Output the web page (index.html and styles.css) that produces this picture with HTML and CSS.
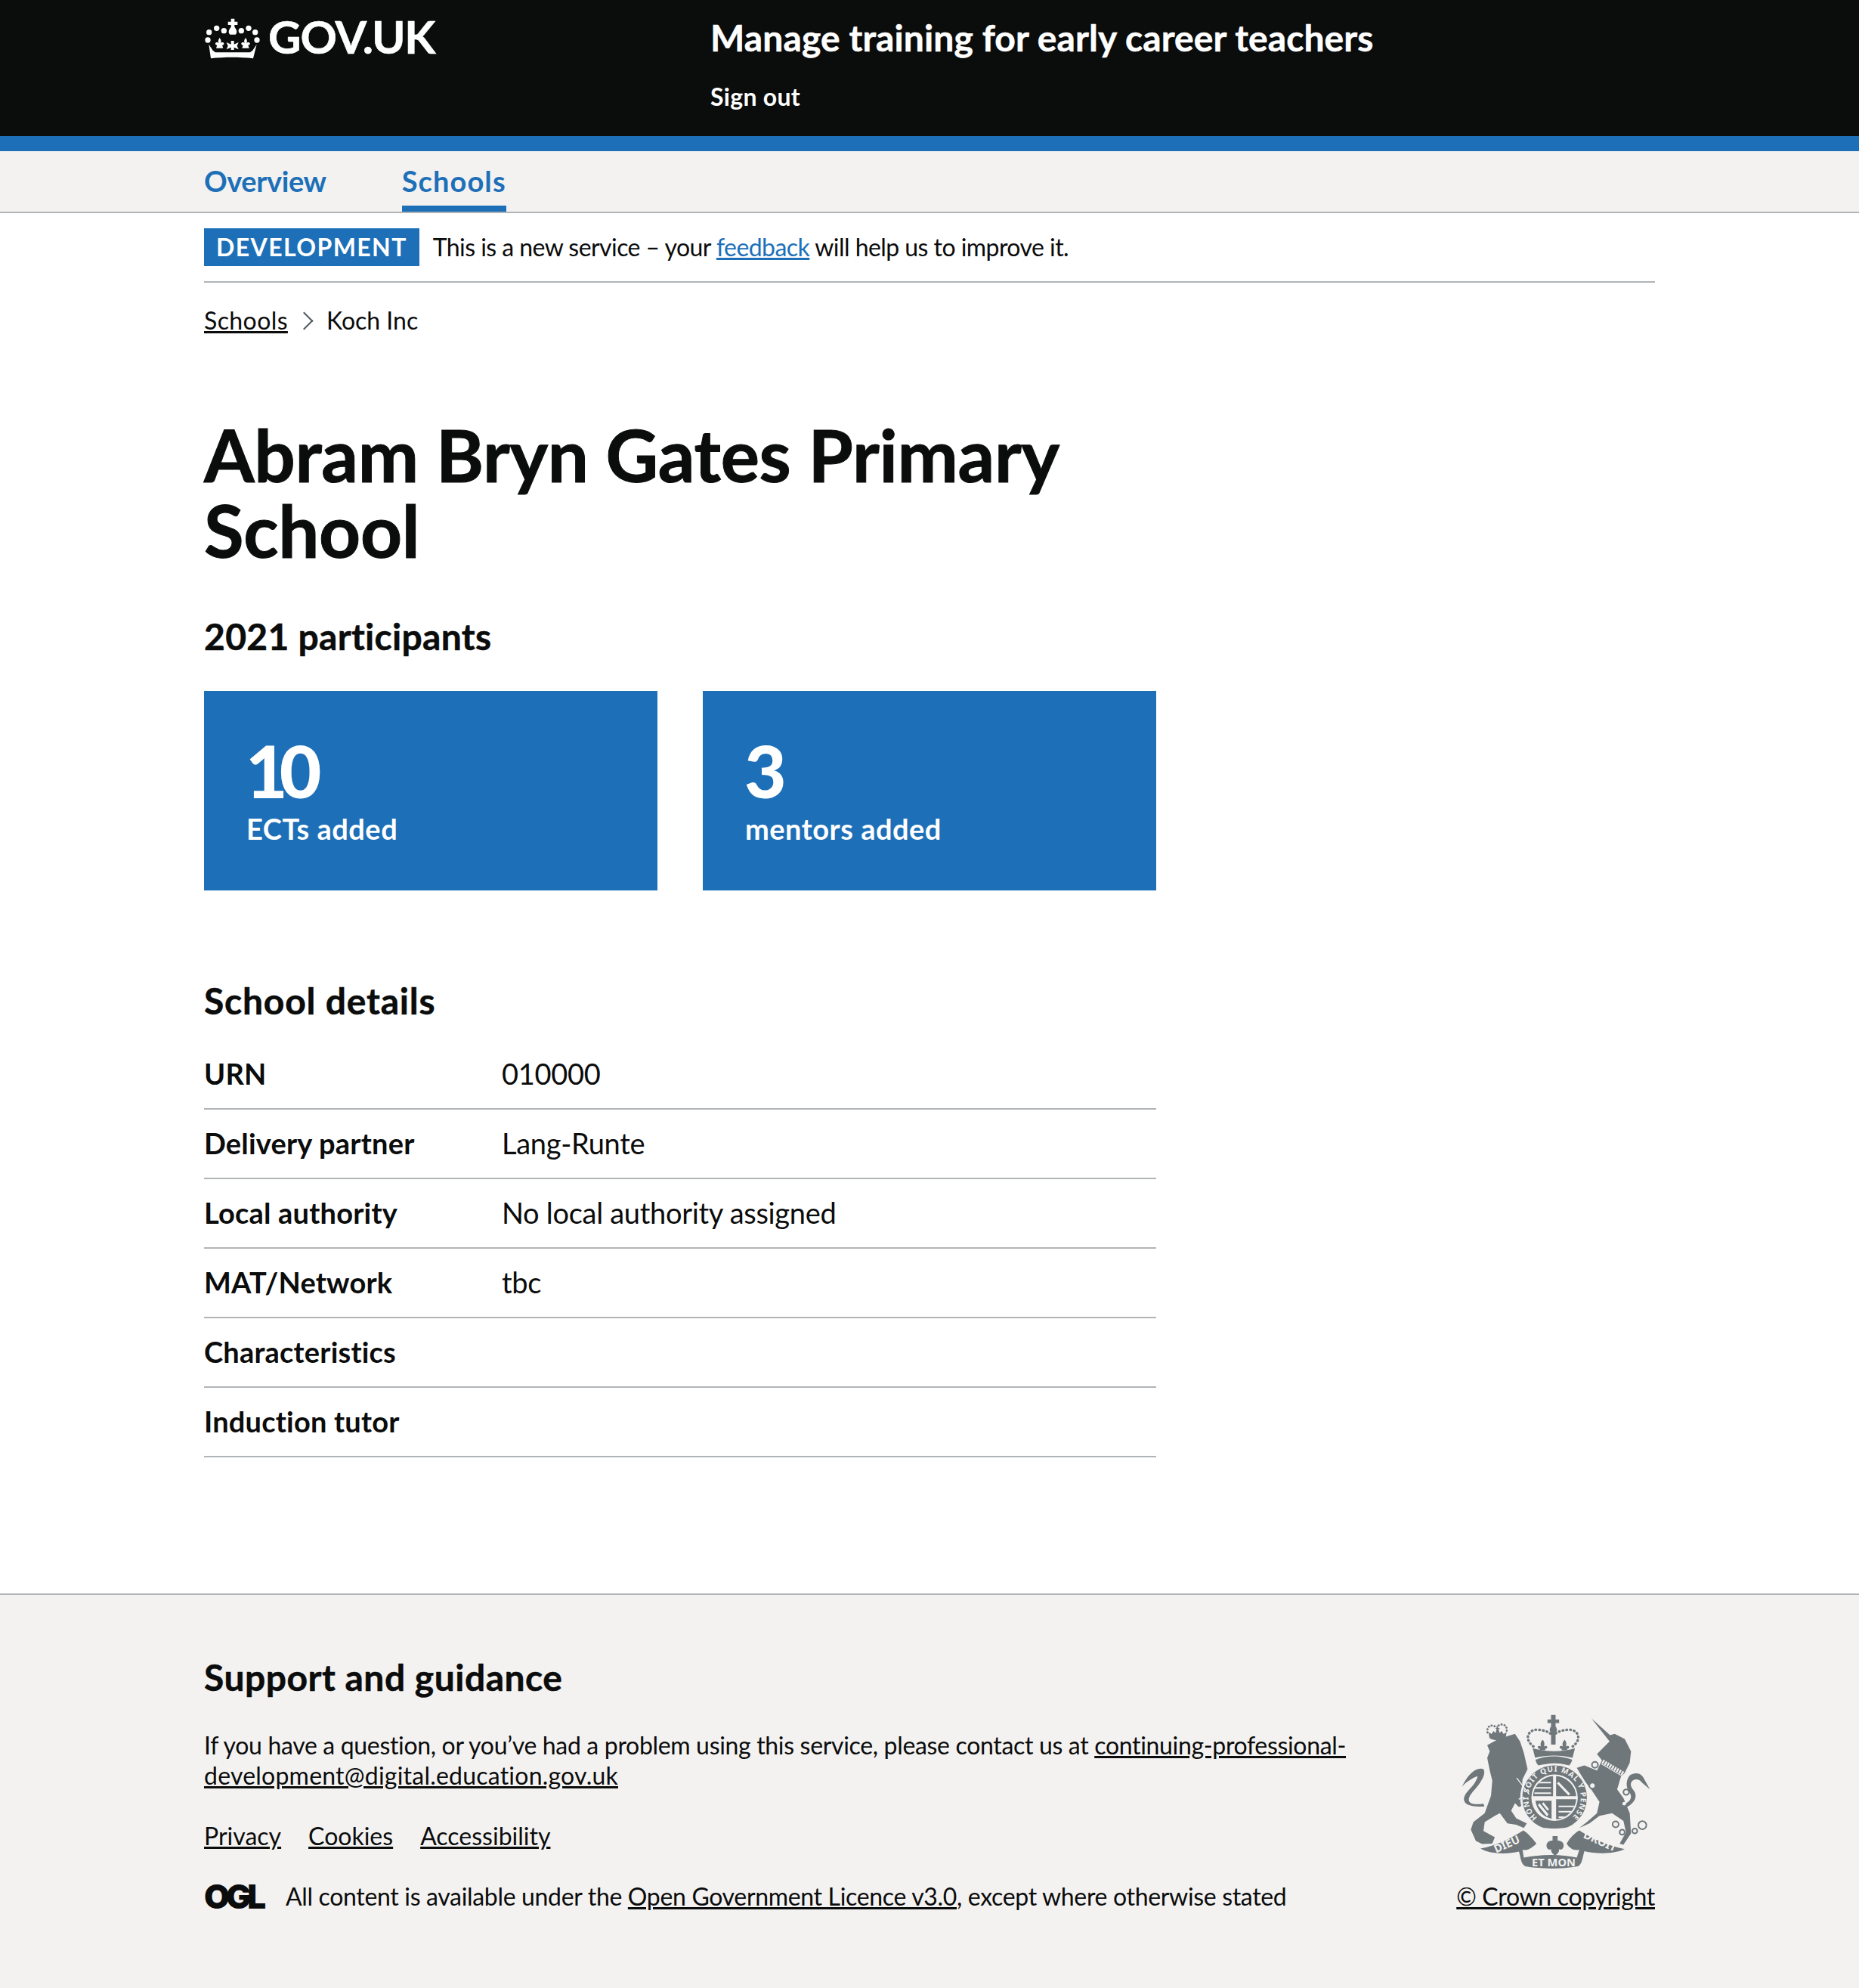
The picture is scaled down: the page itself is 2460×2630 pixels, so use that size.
FILE: index.html
```html
<!DOCTYPE html>
<html lang="en">
<head>
  <meta charset="UTF-8">
  <title>Abram Bryn Gates Primary School</title>
  <link rel="stylesheet" href="styles.css">
</head>
<body>

  <header class="site-header">
    <div class="width-container header-inner">
      <a class="logo" href="#">
        <svg class="crown" viewBox="85 65 225 168" aria-hidden="true">
          <g fill="#fff">
            <path d="M192 70h14v12h12v13h-12v8c10 12 12 22 4 30h-22c-8-8-6-18 4-30v-8h-12V82h12z"/>
            <circle cx="105" cy="124" r="11"/><circle cx="135" cy="108" r="11"/><circle cx="164" cy="118" r="11"/>
            <circle cx="233" cy="118" r="11"/><circle cx="262" cy="108" r="11"/><circle cx="288" cy="124" r="11"/>
            <circle cx="100" cy="155" r="11"/><circle cx="295" cy="155" r="11"/>
            <path d="M147 146c7 9 7 16 3 22 3-5 12-6 14 0 1 5-3 8-7 7l4 12h-28l4-12c-4 1-8-2-7-7 2-6 11-5 14 0-4-6-4-13 3-22z"/>
            <path d="M250 146c7 9 7 16 3 22 3-5 12-6 14 0 1 5-3 8-7 7l4 12h-28l4-12c-4 1-8-2-7-7 2-6 11-5 14 0-4-6-4-13 3-22z"/>
            <path d="M192 158h12v14l18-8-6 14 6 14-18-8v10h-12v-10l-18 8 6-14-6-14 18 8z"/>
            <path d="M104 172l16 24 10 8h138l10-8 16-24-14 56c-50-6-118-6-168 0z"/>
          </g>
        </svg>
        <span class="logo-text">GOV.UK</span>
      </a>
      <div class="service">
        <a class="service-name" href="#">Manage training for early career teachers</a>
        <a class="sign-out" href="#">Sign out</a>
      </div>
    </div>
  </header>

  <nav class="primary-nav">
    <ul class="width-container nav-list">
      <li><a href="#">Overview</a></li>
      <li class="nav-active"><a href="#">Schools</a></li>
    </ul>
  </nav>

  <div class="width-container">
    <div class="phase-banner">
      <strong class="phase-tag">DEVELOPMENT</strong>
      <span>This is a new service – your <a class="link" href="#">feedback</a> will help us to improve it.</span>
    </div>

    <ol class="breadcrumbs">
      <li class="crumb-link"><a href="#">Schools</a></li>
      <li class="crumb-sep" aria-hidden="true"></li>
      <li>Koch Inc</li>
    </ol>

    <main class="main">
      <h1>Abram Bryn Gates Primary School</h1>

      <h2 class="participants-title">2021 participants</h2>
      <div class="cards">
        <div class="card">
          <span class="card-number">10</span>
          <span class="card-label">ECTs added</span>
        </div>
        <div class="card">
          <span class="card-number">3</span>
          <span class="card-label">mentors added</span>
        </div>
      </div>

      <h2 class="details-title">School details</h2>
      <dl class="summary">
        <div class="row"><dt>URN</dt><dd>010000</dd></div>
        <div class="row"><dt>Delivery partner</dt><dd>Lang-Runte</dd></div>
        <div class="row"><dt>Local authority</dt><dd>No local authority assigned</dd></div>
        <div class="row"><dt>MAT/Network</dt><dd>tbc</dd></div>
        <div class="row"><dt>Characteristics</dt><dd></dd></div>
        <div class="row"><dt>Induction tutor</dt><dd></dd></div>
      </dl>
    </main>
  </div>

  <footer class="footer">
    <div class="width-container footer-inner">
      <div class="footer-main">
        <h2>Support and guidance</h2>
        <p class="contact">If you have a question, or you’ve had a problem using this service, please contact us at <a href="#">continuing-professional-<span class="email-rest">development@digital.education.gov.uk</span></a></p>
        <ul class="footer-links">
          <li><a href="#">Privacy</a></li>
          <li><a href="#">Cookies</a></li>
          <li><a href="#">Accessibility</a></li>
        </ul>
        <div class="licence">
          <span class="ogl">OGL</span>
          <span>All content is available under the <a href="#">Open Government Licence v3.0</a>, except where otherwise stated</span>
        </div>
      </div>
      <div class="footer-crest">
        <svg class="crest" viewBox="100 75 755 620" aria-hidden="true">
          <defs>
            <clipPath id="shield-clip"><circle cx="472" cy="408" r="86"/></clipPath>
            <path id="garter-arc" d="M404 487A104 104 0 1 1 540 487"/>
          </defs>
          <g fill="#6f777b">
            <!-- lion -->
            <path d="M205 200l45-25 65-20 20 30 15 45 15 65-20 40-5 65 25 25-20 15-15 5-15-15-15 30 20 30 42 20-12 18-30-13-35-5-30-40-20 10-40 25-5 35 45 25-10 25-40 2-25-12-20-45 10-30 45-35 25-70 5-60-10-40-10-50 10-25z"/>
            <path d="M190 432c-60 8-75-10-38-52 36-40 48-70 38-85-25-10-60 15-85 70 15-18 40-35 62-42-5 22-20 40-38 58-30 32-25 68 65 62z"/>
            <!-- lion crown -->
            <path d="M214 172l-4-24 12 8 8-12 8 8 4-16-6-4h6v-8h6v8h8l-6 4 4 16 8-8 8 12 12-8-4 24c-20 10-44 12-64 0z"/>
            <g fill="none" stroke="#6f777b" stroke-width="8" stroke-dasharray="1 11" stroke-linecap="round">
              <path d="M206 150c-4-24 14-34 30-24M250 122c16-10 36 0 32 22"/>
            </g>
            <!-- unicorn -->
            <path d="M618 94l74 66 18-5 40 20 25 50-5 45-20 40-15 15-15 50 25 35 25 60 5 80-30 45-15-5 25-45-10-45-45-30-50 10-40 30-40 18 30-23 40-35 10-45-30-45-30-40-30-50 30-10 50 20 20-40-20-25 50-50z"/>
            <path d="M770 320c20-14 45-10 55 10l25 45-30-25c-10-15-30-20-42-6-8 12-2 24 8 36 16 22 6 48-28 66l-5-14c22-12 28-28 16-44-16-22-14-50 1-68z"/>
            <!-- crown over shield -->
            <path d="M458 80h18v18h14v14h-14v14c8 10 6 20 0 24v48h-18v-48c-6-4-8-14 0-24v-14h-14V98h14z"/>
            <path d="M425 178c8 10 8 20 4 28 3-4 12-5 14 1 1 5-4 8-8 7v6h-22v-6c-4 1-9-2-8-7 2-6 11-5 14-1-4-8-4-18 6-28zM512 178c8 10 8 20 4 28 3-4 12-5 14 1 1 5-4 8-8 7v6h-22v-6c-4 1-9-2-8-7 2-6 11-5 14-1-4-8-4-18 6-28z"/>
            <path d="M385 212c50 16 120 16 168 0l-10 38c-45-12-102-12-148 0z"/>
            <path d="M396 258c46-18 100-18 146 0-2 10-8 18-12 22-40-10-80-10-122 0-4-4-10-12-12-22z"/>
            <g fill="none" stroke="#6f777b" stroke-width="10" stroke-dasharray="2 13" stroke-linecap="round">
              <path d="M388 205c-40-30-20-70 20-66 25 2 45 10 58 24 12-14 32-22 58-24 40-4 60 36 20 66"/>
            </g>
            <!-- garter -->
            <circle cx="472" cy="408" r="132" stroke="#f3f2f1" stroke-width="8"/>
          </g>
          <circle cx="472" cy="408" r="92" fill="#f3f2f1"/>
          <g clip-path="url(#shield-clip)">
            <path fill="#6f777b" d="M380 316h86v86h-86zM478 316h86v86h-86zM478 414h86v86h-86z"/>
            <path fill="#f3f2f1" d="M392 345h66v6h-66zM392 366h66v6h-66zM392 387h66v6h-66zM488 345l46 48-7 6-46-48zM488 440h66v6h-66zM488 461h66v6h-66zM488 482h66v6h-66z"/>
            <path fill="#6f777b" d="M396 420h64v72c-36-8-58-34-64-72z"/>
            <path fill="#f3f2f1" d="M412 430l36 44-6 8-36-44zM428 426l22 28-6 6-22-28z"/>
          </g>
          <!-- collar and chain -->
          <path fill="none" stroke="#f3f2f1" stroke-width="16" stroke-dasharray="7 4" d="M662 264l84 50"/>
          <path fill="none" stroke="#f3f2f1" stroke-width="3" d="M658 274l84 50"/>
          <path fill="none" stroke="#f3f2f1" stroke-width="4" d="M322 330l50 66M330 415c10-10 18-12 24-4"/>
          <g fill="#f3f2f1" stroke="#6f777b" stroke-width="6">
            <circle cx="632" cy="278" r="12"/><circle cx="622" cy="360" r="12"/><circle cx="756" cy="386" r="11"/>
            <circle cx="714" cy="514" r="12"/><circle cx="740" cy="545" r="10"/><circle cx="790" cy="540" r="10"/><circle cx="820" cy="517" r="16"/>
          </g>
          <circle cx="748" cy="432" r="7" fill="#f3f2f1"/>
          <!-- scrolls -->
          <path fill="#6f777b" d="M178 610c60-10 120-40 170-72 20 12 34 30 52 52-20 20-40 30-55 24l5 32c70-14 150-14 210 0l10-32c-20 6-40-6-50-24 14-24 30-40 50-52 50 32 110 60 180 74-40 20-110 20-160 8-10 40-10 50-25 60-70 12-140 12-210 0-15-10-15-20-24-58-50 12-115 10-153-12z"/>
          <path fill="#6f777b" d="M464 560h20v18c10 0 24 4 24 20 0 14-12 20-18 14 0 14-6 18-16 26-10-8-16-12-16-26-6 6-18 0-18-14 0-16 14-20 24-20z"/>
          <path fill="#f3f2f1" d="M400 520c30 14 110 14 140 0l-6 14c-36 12-92 12-128 0z"/>
          <circle cx="440" cy="536" r="7" fill="#f3f2f1"/><circle cx="478" cy="540" r="7" fill="#f3f2f1"/>
          <g class="crest-text">
            <text transform="translate(240 628) rotate(-24)">DIEU</text>
            <text x="382" y="680">ET MON</text>
            <text transform="translate(583 566) rotate(24)">DROIT</text>
          </g>
          <text class="garter-text"><textPath href="#garter-arc" textLength="500" lengthAdjust="spacing">HONI SOIT QUI MAL Y PENSE</textPath></text>
        </svg>
        <a class="crown-copy" href="#">© Crown copyright</a>
      </div>
    </div>
  </footer>

</body>
</html>
```
FILE: styles.css
```css
* {
  box-sizing: border-box;
}

body {
  margin: 0;
  font-family: Lato, "Noto Sans", Arial, sans-serif;
  font-size: 38px;
  line-height: 50px;
  font-variant-ligatures: none;
  color: #0b0c0c;
  background: #fff;
}

a {
  color: inherit;
}

ul, ol {
  list-style: none;
  margin: 0;
  padding: 0;
}

.width-container {
  width: 1920px;
  margin: 0 auto;
}

/* header */
.site-header {
  height: 200px;
  background: #0b0c0c;
  border-bottom: 20px solid #1d70b8;
  color: #fff;
}

.header-inner {
  display: flex;
}

.header-inner a {
  text-decoration: none;
}

.logo {
  display: flex;
  align-items: flex-start;
  width: 670px;
  padding-top: 18px;
}

.crown {
  width: 75px;
  height: 56px;
  margin-top: 5px;
}

.logo-text {
  margin-left: 10px;
  font-size: 60px;
  line-height: 60px;
  font-weight: 700;
  letter-spacing: -1.1px;
  -webkit-text-stroke: 0.6px #fff;
}

.service {
  display: flex;
  flex-direction: column;
  align-items: flex-start;
  padding-top: 20px;
}

.service-name {
  font-size: 48px;
  line-height: 60px;
  font-weight: 700;
  letter-spacing: 0.1px;
  -webkit-text-stroke: 0.5px #fff;
}

.sign-out {
  margin-top: 28px;
  font-size: 32px;
  line-height: 40px;
  font-weight: 700;
  letter-spacing: 0.3px;
}

/* nav */
.primary-nav {
  height: 82px;
  background: #f3f2f1;
  border-bottom: 2px solid #b1b4b6;
}

.nav-list {
  display: flex;
  gap: 100px;
  height: 80px;
}

.nav-list li {
  padding-top: 14px;
}

.nav-list a {
  font-size: 38px;
  line-height: 50px;
  font-weight: 700;
  letter-spacing: -0.4px;
  color: #1d70b8;
  text-decoration: none;
}

.nav-active {
  border-bottom: 8px solid #1d70b8;
}

.nav-list .nav-active a {
  letter-spacing: 1.1px;
}

/* phase banner */
.phase-banner {
  display: flex;
  align-items: center;
  gap: 18px;
  height: 92px;
  border-bottom: 2px solid #b1b4b6;
  font-size: 32px;
  line-height: 40px;
  letter-spacing: -0.55px;
}

.phase-tag {
  background: #1d70b8;
  color: #fff;
  font-size: 32px;
  line-height: 50px;
  padding: 0 16px;
  letter-spacing: 1.4px;
}

.link {
  color: #1d70b8;
}

/* breadcrumbs */
.breadcrumbs {
  display: flex;
  align-items: center;
  margin-top: 30px;
  font-size: 32px;
  line-height: 40px;
}

.crumb-link {
  letter-spacing: 0.4px;
}

.crumb-sep {
  width: 17px;
  height: 17px;
  margin: 0 21px 0 13px;
  border-top: 2px solid #505a5f;
  border-right: 2px solid #505a5f;
  transform: rotate(45deg);
}

/* main */
.main {
  width: 1260px;
  padding-top: 107px;
  padding-bottom: 180px;
}

h1 {
  margin: 0 0 60px;
  font-size: 96px;
  line-height: 100px;
  font-weight: 700;
  letter-spacing: -0.3px;
  -webkit-text-stroke: 1px #0b0c0c;
}

h2 {
  margin: 0;
  font-size: 48px;
  line-height: 60px;
  font-weight: 700;
  letter-spacing: 0.3px;
  -webkit-text-stroke: 0.5px #0b0c0c;
}

.participants-title {
  margin-bottom: 42px;
  padding-top: 1px;
}

.cards {
  display: flex;
  gap: 60px;
}

.card {
  display: flex;
  flex-direction: column;
  width: 600px;
  height: 264px;
  padding: 55px 56px 0;
  background: #1d70b8;
  color: #fff;
  font-weight: 700;
}

.card-number {
  margin-left: -1px;
  font-size: 96px;
  line-height: 100px;
  font-weight: 900;
  letter-spacing: -11px;
}

.card-label {
  margin-top: 2px;
  font-size: 38px;
  line-height: 50px;
  letter-spacing: 0.5px;
}

.details-title {
  margin-top: 116px;
  margin-bottom: 22px;
  letter-spacing: 0.8px;
}

.summary {
  margin: 0;
}

.row {
  display: flex;
  height: 92px;
  padding-top: 19px;
  border-bottom: 2px solid #b1b4b6;
}

dt {
  width: 394px;
  font-weight: 700;
  letter-spacing: 0.2px;
}

dd {
  margin: 0;
  letter-spacing: -0.3px;
}

/* footer */
.footer {
  height: 522px;
  background: #f3f2f1;
  border-top: 2px solid #b1b4b6;
  font-size: 32px;
  line-height: 40px;
  letter-spacing: -0.33px;
}

.footer-inner {
  display: flex;
  justify-content: space-between;
}

.footer-main {
  width: 1520px;
  padding-top: 79px;
}

.footer-main h2 {
  margin-bottom: 40px;
  letter-spacing: 0.5px;
}

.contact {
  margin: 0 0 40px;
}

.email-rest {
  letter-spacing: 0.22px;
}

.footer-links {
  display: flex;
  gap: 36px;
  margin-bottom: 40px;
  letter-spacing: 0;
}

.licence {
  display: flex;
  align-items: center;
  gap: 26px;
}

.ogl {
  font-family: Inter, "Noto Sans", sans-serif;
  font-size: 44px;
  line-height: 40px;
  font-weight: 900;
  letter-spacing: -5px;
  width: 82px;
}

.footer-crest {
  display: flex;
  flex-direction: column;
  align-items: center;
  padding-top: 157px;
}

.crest {
  width: 252px;
  height: 207px;
}

.crest-text text,
.garter-text {
  font-family: "Noto Sans", sans-serif;
  font-weight: 700;
  fill: #f3f2f1;
  letter-spacing: 0;
}

.crest-text text {
  font-size: 44px;
}

.garter-text {
  font-size: 30px;
}

.crown-copy {
  margin-top: 15px;
}
```
